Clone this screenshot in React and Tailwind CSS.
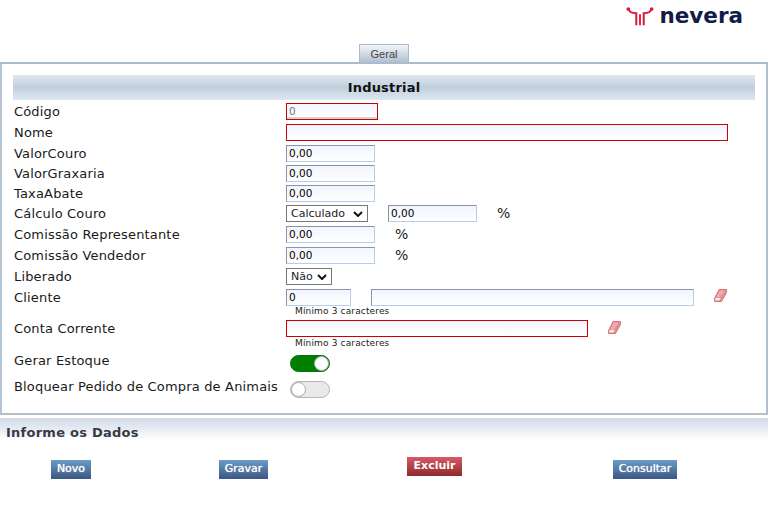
import React from 'react';

const font = { fontFamily: '"DejaVu Sans", Verdana, sans-serif' };

const inputBase = 'h-[17px] box-border border bg-gradient-to-b from-[#f1f5fd] to-white px-[2px] pb-[1px] text-[10.5px] leading-none text-black font-["DejaVu_Sans"] outline-none';
const inputBlue = 'border-[#b7cdee] border-t-[#8a94a6] border-l-[#8a94a6]';
const inputRed = 'border-[#d00000]';

const Field = ({ className = '', value = '' }) => (
  <input readOnly value={value} className={`${inputBase} ${className}`} />
);

const Row = ({ label, h = 'h-[21px]', leading = 'leading-[17px]', children }) => (
  <div className={`flex items-start ${h}`}>
    <label className={`w-[272px] shrink-0 text-[13px] tracking-[0.17px] text-[#1a1a1a] ${leading}`}>{label}</label>
    {children}
  </div>
);

const Select = ({ value, className }) => (
  <div className={`flex h-[17px] items-center justify-between border border-[#767676] bg-white px-[4px] pt-[1px] text-[11px] text-[#1a1a2a] ${className}`}>
    <span>{value}</span>
    <svg width="10" height="6" viewBox="0 0 10 6" fill="none" stroke="#111" strokeWidth="2"><path d="M1 1l4 4 4-4" /></svg>
  </div>
);

const Eraser = () => (
  <svg width="13" height="13" viewBox="0 0 13 13">
    <path d="M5 .5H12.5V3.5L7.5 12.5H.5V9.5z" fill="#e58f92" stroke="#c4666b" strokeWidth=".8" />
    <path d="M5.5 1.5H11L6 8.5H2z" fill="#eda9ab" />
    <path d="M1.5 9H6.5L5.5 11.5H1.2z" fill="#fde8e8" />
  </svg>
);

const Toggle = ({ on }) => (
  <div className={`relative ml-[4px] h-[17px] w-[40px] rounded-full border ${on ? 'border-[#0d6b0d] bg-[#008000]' : 'border-[#b5b5b5] bg-[#e9e9e9]'}`}>
    <div className={`absolute top-0 h-[15px] w-[15px] rounded-full border border-[#aaa] bg-white ${on ? 'right-0' : 'left-0'}`} />
  </div>
);

const Button = ({ children, red, className = '' }) => (
  <button className={`h-[19px] pb-[2px] text-[11px] leading-none text-white ${red ? 'bg-gradient-to-b from-[#d65a68] to-[#8f2b2b] font-bold' : 'bg-gradient-to-b from-[#6b9cc5] to-[#3d5784] [text-shadow:0_0_1px_#fff]'} ${className}`}>
    {children}
  </button>
);

const Hint = ({ h, children }) => (
  <div className={`ml-[281px] text-[9px] leading-[11px] tracking-[0.15px] text-[#222] ${h}`}>{children}</div>
);

export default function App() {
  return (
    <div className="h-[519px] w-[768px] overflow-hidden bg-white" style={font}>
      {/* Logo */}
      <div className="flex h-[44px] items-start justify-end pr-[25px] pt-[5px]">
        <div className="flex items-center gap-[5px]">
          <svg width="28" height="22" viewBox="0 0 30 22" fill="none" stroke="#e0173f">
            <path d="M2.5 3.5c1 3 4 4.5 8.5 4.5v13M27.5 3.5c-1 3-4 4.5-8.5 4.5v13" strokeWidth="2.2" />
            <path d="M15 9v12" strokeWidth="2" />
            <circle cx="2.5" cy="3.5" r="2" fill="#e0173f" stroke="none" />
            <circle cx="27.5" cy="3.5" r="2" fill="#e0173f" stroke="none" />
          </svg>
          <span className="text-[21.5px] font-bold leading-none text-[#131c47]">nevera</span>
        </div>
      </div>

      {/* Tab */}
      <div className="flex h-[18px] pl-[359px]">
        <div className="flex h-[19px] w-[50px] items-center justify-center border-x border-t border-[#a9bccf] bg-gradient-to-b from-[#f4f6f8] to-[#aebdce] pt-[1px] font-['Liberation_Sans'] text-[11px] text-[#444]">
          Geral
        </div>
      </div>

      {/* Panel */}
      <div className="relative h-[353px] border-2 border-[#a9bbcf] border-b-[#b5bfc9] border-l-[#b5c4d4] border-r-[#b0bfd0] px-[11px] pt-[11px]">
        <div className="flex h-[25px] items-center justify-center bg-gradient-to-b from-[#dfe7ef] via-[#c0cfde] to-[#dfe7ef] pt-[1px] text-[13px] font-bold tracking-[0.2px] text-[#111]">
          Industrial
        </div>
        <div className="pl-[1px] pt-[3px]">
          <Row label="Código"><Field value="0" className="w-[92px] !text-[#777] border-[#d00000] shadow-[inset_0_-2px_0_#d4d4d4]" /></Row>
          <Row label="Nome"><Field className={`w-[442px] ${inputRed}`} /></Row>
          <Row label="ValorCouro" h="h-[20px]"><Field value="0,00" className={`w-[89px] ${inputBlue}`} /></Row>
          <Row label="ValorGraxaria" h="h-[20px]"><Field value="0,00" className={`w-[89px] ${inputBlue}`} /></Row>
          <Row label="TaxaAbate" h="h-[20px]"><Field value="0,00" className={`w-[89px] ${inputBlue}`} /></Row>
          <Row label="Cálculo Couro">
            <Select value="Calculado" className="w-[82px]" />
            <Field value="0,00" className={`ml-[20px] w-[89px] ${inputBlue}`} />
            <span className="ml-[20px] text-[14px] leading-[17px] text-[#222]">%</span>
          </Row>
          <Row label="Comissão Representante">
            <Field value="0,00" className={`w-[89px] ${inputBlue}`} />
            <span className="ml-[20px] text-[14px] leading-[17px] text-[#222]">%</span>
          </Row>
          <Row label="Comissão Vendedor">
            <Field value="0,00" className={`w-[89px] ${inputBlue}`} />
            <span className="ml-[20px] text-[14px] leading-[17px] text-[#222]">%</span>
          </Row>
          <Row label="Liberado"><Select value="Não" className="w-[46px]" /></Row>
          <Row label="Cliente" h="h-[17px]">
            <Field value="0" className={`w-[65px] ${inputBlue}`} />
            <Field className={`ml-[20px] w-[323px] ${inputBlue}`} />
            <span className="ml-[20px]"><Eraser /></span>
          </Row>
          <Hint h="h-[14px]">Mínimo 3 caracteres</Hint>
          <Row label="Conta Corrente" h="h-[18px]">
            <Field className={`w-[302px] ${inputRed}`} />
            <span className="ml-[20px] mt-[1px]"><Eraser /></span>
          </Row>
          <Hint h="h-[17px]">Mínimo 3 caracteres</Hint>
          <Row label="Gerar Estoque" h="h-[26px]" leading="leading-[11px]"><Toggle on /></Row>
          <Row label="Bloquear Pedido de Compra de Animais" h="h-[26px]" leading="leading-[11px]"><Toggle /></Row>
        </div>
      </div>

      {/* Footer */}
      <div className="mt-[3px] h-[22px] bg-gradient-to-b from-[#d0dae6] to-white pl-[6px] pt-[6px] text-[13px] font-bold leading-[18px] tracking-[0.25px] text-[#3a3a46]">
        Informe os Dados
      </div>
      <div className="mt-[17px] flex items-start">
        <Button className="ml-[51px] mt-[3px] w-[40px]">Novo</Button>
        <Button className="ml-[128px] mt-[3px] w-[49px]">Gravar</Button>
        <Button red className="ml-[139px] w-[55px]">Excluir</Button>
        <Button className="ml-[151px] mt-[3px] w-[64px]">Consultar</Button>
      </div>
    </div>
  );
}
